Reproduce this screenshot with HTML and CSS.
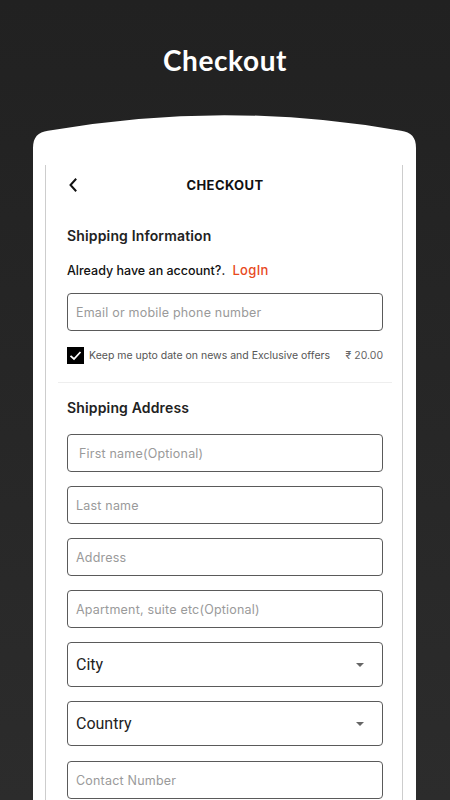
FILE: index.html
```html
<!DOCTYPE html>
<html lang="en">
<head>
<meta charset="utf-8">
<title>Checkout</title>
<link rel="stylesheet" href="styles.css">
</head>
<body>
<div class="page">
  <h1 class="title">Checkout</h1>
  <div class="device">
    <div class="screen">
      <header class="bar">
        <svg class="back" width="10" height="14" viewBox="0 0 10 14" aria-hidden="true"><path d="M7.5 1.5 L2.5 7 L7.5 12.5" fill="none" stroke="#111" stroke-width="2" stroke-linecap="square"/></svg>
        <span class="bar-title">CHECKOUT</span>
      </header>

      <section class="info">
        <h2 class="heading">Shipping Information</h2>
        <p class="account">Already have an account?. <a class="login" href="#">LogIn</a></p>
        <div class="field field-email">Email or mobile phone number</div>
        <div class="offer">
          <span class="check"><svg width="17" height="17" viewBox="0 0 17 17" aria-hidden="true"><path d="M3.5 8.8 L7 12 L13.5 5" fill="none" stroke="#fff" stroke-width="1.8"/></svg></span>
          <span class="offer-text">Keep me upto date on news and Exclusive offers</span>
          <span class="price">₹ 20.00</span>
        </div>
      </section>

      <div class="divider"></div>

      <section class="address">
        <h2 class="heading">Shipping Address</h2>
        <div class="fields">
          <div class="field field-indent">First name(Optional)</div>
          <div class="field">Last name</div>
          <div class="field">Address</div>
          <div class="field">Apartment, suite etc(Optional)</div>
          <div class="field select"><span>City</span><span class="caret"></span></div>
          <div class="field select"><span>Country</span><span class="caret"></span></div>
          <div class="field field-last">Contact Number</div>
        </div>
      </section>
    </div>
  </div>
</div>
</body>
</html>
```

FILE: styles.css
```css
* { box-sizing: border-box; }

html, body {
  margin: 0;
  padding: 0;
  height: 100%;
}

body {
  background: linear-gradient(#212121, #2c2c2c);
  overflow: hidden;
  font-family: "Inter", "Liberation Sans", sans-serif;
  color: #1c1c1c;
}

.page {
  width: 450px;
  height: 800px;
  display: flex;
  flex-direction: column;
}

.title {
  margin: 0;
  height: 115px;
  padding-top: 43px;
  text-align: center;
  font-family: "Lato", sans-serif;
  font-weight: 700;
  font-size: 28px;
  line-height: 34px;
  color: #ffffff;
  letter-spacing: 0.6px;
}

.device {
  margin-left: 33px;
  width: 383px;
  flex: 1;
  background: #ffffff;
  clip-path: path("M0 700 L0 33 C0 22 5 17.5 15 15.8 Q191.5 -15.5 368 15.8 C378 17.5 383 22 383 33 L383 700 Z");
  padding: 50px 13px 0 12px;
}

.screen {
  height: 100%;
  border-left: 1px solid #cdcdcd;
  border-right: 1px solid #cdcdcd;
  padding: 0 19px 0 21px;
}

.bar {
  height: 40px;
  display: flex;
  align-items: center;
  justify-content: center;
  position: relative;
}

.back {
  position: absolute;
  left: 1px;
  top: 13px;
}

.bar-title {
  font-weight: 700;
  font-size: 13px;
  letter-spacing: 0.4px;
  color: #111;
}

.heading {
  margin: 21px 0 0;
  font-size: 14px;
  line-height: 20px;
  font-weight: 600;
  color: #222;
  letter-spacing: 0.15px;
}

.account {
  margin: 14px 0 0;
  font-size: 12.5px;
  line-height: 20px;
  font-weight: 500;
  color: #111;
}

.login {
  margin-left: 4px;
  color: #e8491d;
  text-decoration: none;
  font-size: 13px;
  letter-spacing: 0.3px;
}

.field {
  height: 38px;
  border: 1px solid #5a5a5a;
  border-radius: 4px;
  display: flex;
  align-items: center;
  padding-left: 8px;
  font-size: 12.5px;
  letter-spacing: 0.2px;
  color: #9a9a9a;
}

.field-email { margin-top: 12px; }

.field-indent { padding-left: 11px; }

.offer {
  margin-top: 16px;
  height: 17px;
  display: flex;
  align-items: center;
}

.check {
  width: 17px;
  height: 17px;
  background: #000;
  display: block;
  flex: none;
}

.check svg { display: block; }

.offer-text {
  margin-left: 5px;
  font-size: 10.5px;
  color: #555;
  flex: 1;
}

.price {
  font-size: 10.5px;
  color: #666;
}

.divider {
  margin: 18px -9px 0;
  height: 1px;
  background: #eeeeee;
}

.address .heading { margin-top: 15px; }

.fields {
  margin-top: 16px;
  display: flex;
  flex-direction: column;
  gap: 14px;
}

.select {
  height: 45px;
  justify-content: space-between;
  padding-right: 18px;
  font-family: "Roboto", sans-serif;
  font-size: 16px;
  letter-spacing: 0;
  color: #222;
}

.caret {
  width: 0;
  height: 0;
  border-left: 4px solid transparent;
  border-right: 4px solid transparent;
  border-top: 4px solid #666;
}

.field-last { margin-top: 1px; }
```
